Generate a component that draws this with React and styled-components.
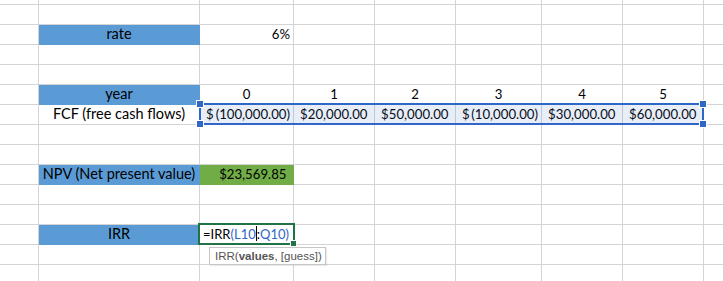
import React from 'react'
import styled, { createGlobalStyle } from 'styled-components'

const GlobalStyle = createGlobalStyle`
  html, body {
    margin: 0;
    padding: 0;
    background: #ffffff;
    overflow: hidden;
  }
  body {
    font-family: Lato, "Liberation Sans", Arial, sans-serif;
  }
`

const COLS = [39, 161, 94, 81, 81, 86, 81, 81, 20]
const ROW_COUNT = 15

const Sheet = styled.div`
  display: grid;
  grid-template-columns: ${COLS.map(w => `${w}px`).join(' ')};
  grid-template-rows: 5px repeat(${ROW_COUNT - 1}, 20px);
  width: 724px;
  height: 281px;
  overflow: hidden;
  font-size: 14.5px;
  color: #000000;
`

const Cell = styled.div`
  grid-row: ${p => p.$r};
  grid-column: ${p => p.$c};
  box-sizing: border-box;
  border-right: 1px solid ${p => p.$fill || '#d4d4d4'};
  border-bottom: 1px solid ${p => p.$fill || '#d4d4d4'};
  background: ${p => p.$fill || 'transparent'};
  display: flex;
  align-items: flex-end;
  justify-content: ${p => p.$align || 'flex-start'};
  padding: 0 3px 1px 3px;
  line-height: 18px;
  font-size: ${p => (p.$num ? '13.2px' : 'inherit')};
  white-space: nowrap;
  overflow: visible;
`

const Money = styled.div`
  flex: 1;
  display: flex;
  justify-content: space-between;
  padding-left: 3px;
`

const Ghost = styled.span`
  visibility: hidden;
`

const Selection = styled.div`
  grid-row: 7;
  grid-column: 3 / 9;
  margin: -2px 0 0 -1px;
  border: 2px solid #2e67c6;
  background: rgba(68, 114, 196, 0.12);
  position: relative;
  pointer-events: none;
  z-index: 2;
`

const Handle = styled.span`
  position: absolute;
  width: 6px;
  height: 6px;
  background: #2e67c6;
  border: 1px solid #ffffff;
  box-sizing: content-box;
  ${p => (p.$top ? 'top: -5px;' : 'bottom: -5px;')}
  ${p => (p.$left ? 'left: -5px;' : 'right: -5px;')}
`

const EditBox = styled.div`
  grid-row: 13;
  grid-column: 3;
  margin: -2px -1px 0 -2px;
  border: 2px solid #217346;
  background: #ffffff;
  position: relative;
  z-index: 3;
  display: flex;
  align-items: flex-end;
  padding: 0 0 0 3px;
  font-size: 13px;
  line-height: 18px;
  white-space: nowrap;
`

const FillHandle = styled.span`
  position: absolute;
  right: -4px;
  bottom: -4px;
  width: 5px;
  height: 5px;
  background: #217346;
  border: 1px solid #ffffff;
`

const Ref = styled.span`
  color: ${p => p.$color || '#000000'};
`

const Caret = styled.span`
  display: inline-block;
  width: 1px;
  height: 15px;
  background: #000000;
  margin: 0 0 -2px 0;
  vertical-align: baseline;
`

const Tip = styled.div`
  position: absolute;
  left: 9px;
  top: 22px;
  width: 117px;
  height: 18px;
  box-sizing: border-box;
  border: 1px solid #c6c6c6;
  background: #ffffff;
  color: #555555;
  font-family: "Liberation Sans", Arial, sans-serif;
  font-size: 11.5px;
  line-height: 16px;
  padding-left: 5px;
  box-shadow: 1px 1px 1px rgba(0, 0, 0, 0.08);
`

const BLUE = '#5b9bd5'
const GREEN = '#70ad47'
const REF = '#2e67c6'

const money = (value, negative) => (
  <Money>
    <span>$</span>
    <span>
      {negative ? `(${value})` : value}
      {!negative && <Ghost>)</Ghost>}
    </span>
  </Money>
)

const cells = {
  '3,2': { text: 'rate', fill: BLUE, align: 'center' },
  '3,3': { text: '6%', align: 'flex-end', num: true },
  '6,2': { text: 'year', fill: BLUE, align: 'center' },
  '6,3': { text: '0', align: 'center', num: true },
  '6,4': { text: '1', align: 'center', num: true },
  '6,5': { text: '2', align: 'center', num: true },
  '6,6': { text: '3', align: 'center', num: true },
  '6,7': { text: '4', align: 'center', num: true },
  '6,8': { text: '5', align: 'center', num: true },
  '7,2': { text: 'FCF (free cash flows)', align: 'center' },
  '7,3': { text: money('100,000.00', true), num: true },
  '7,4': { text: money('20,000.00'), num: true },
  '7,5': { text: money('50,000.00'), num: true },
  '7,6': { text: money('10,000.00', true), num: true },
  '7,7': { text: money('30,000.00'), num: true },
  '7,8': { text: money('60,000.00'), num: true },
  '10,2': { text: 'NPV (Net present value)', fill: BLUE, align: 'center' },
  '10,3': {
    text: (
      <span>
        $23,569.85<Ghost>)</Ghost>
      </span>
    ),
    fill: GREEN,
    align: 'flex-end',
    num: true,
  },
  '13,2': { text: 'IRR', fill: BLUE, align: 'center' },
}

const App = () => {
  const grid = []
  for (let r = 1; r <= ROW_COUNT; r++) {
    for (let c = 1; c <= COLS.length; c++) {
      const cell = cells[`${r},${c}`] || {}
      grid.push(
        <Cell
          key={`${r}-${c}`}
          $r={r}
          $c={c}
          $fill={cell.fill}
          $align={cell.align}
          $num={cell.num}
        >
          {cell.text}
        </Cell>
      )
    }
  }

  return (
    <>
      <GlobalStyle />
      <Sheet>
        {grid}
        <Selection>
          <Handle $top $left />
          <Handle $top />
          <Handle $left />
          <Handle />
        </Selection>
        <EditBox>
          <span>
            =IRR<Ref $color={REF}>(</Ref>
            <Ref $color={REF}>L10</Ref>
            <Caret />
            :<Ref $color={REF}>Q10</Ref>
            <Ref $color={REF}>)</Ref>
          </span>
          <FillHandle />
          <Tip>
            IRR(<b>values</b>, [guess])
          </Tip>
        </EditBox>
      </Sheet>
    </>
  )
}

export default App
